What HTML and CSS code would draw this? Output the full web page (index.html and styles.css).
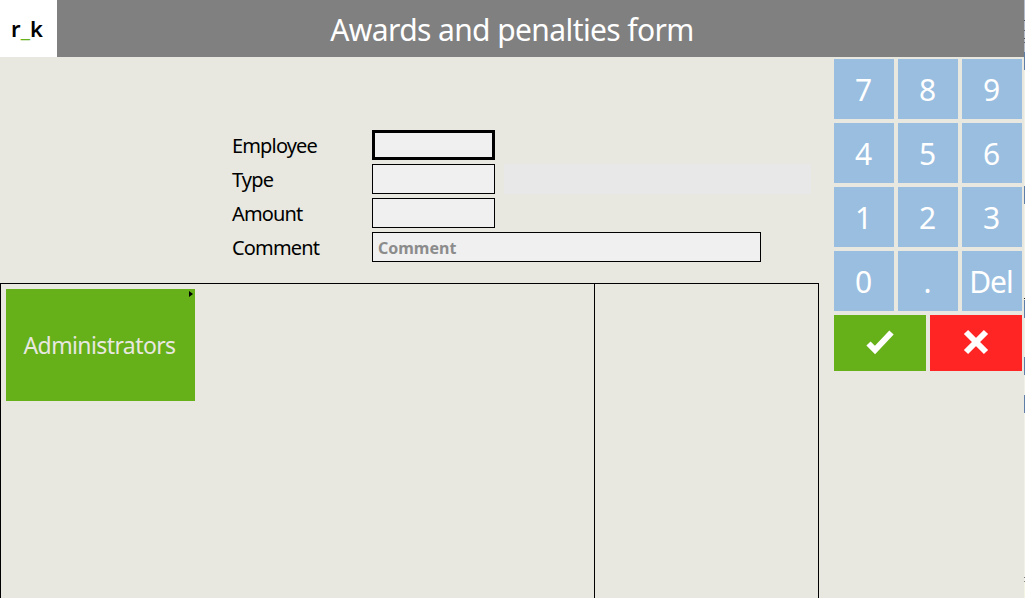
FILE: index.html
```html
<!DOCTYPE html>
<html lang="en">
<head>
    <meta charset="UTF-8">
    <meta name="viewport" content="width=device-width, initial-scale=1.0">
    <title>Awards and penalties form</title>
    <link rel="stylesheet" href="styles.css">
</head>
<body>
    <div class="header">
        <div class="logo">r<span class="logo-line">_</span>k</div>
        <h1>Awards and penalties form</h1>
    </div>

    <div class="main">
        <div class="left">
            <div class="form">
                <div class="row">
                    <label>Employee</label>
                    <input type="text" class="field active">
                </div>
                <div class="row">
                    <label>Type</label>
                    <input type="text" class="field">
                    <div class="type-name"></div>
                </div>
                <div class="row">
                    <label>Amount</label>
                    <input type="text" class="field">
                </div>
                <div class="row">
                    <label>Comment</label>
                    <input type="text" class="field wide" placeholder="Comment">
                </div>
            </div>

            <div class="panels">
                <div class="groups">
                    <button class="tile">Administrators<span class="tile-mark"></span></button>
                </div>
                <div class="items"></div>
            </div>
        </div>

        <div class="side">
            <div class="keypad">
                <button>7</button>
                <button>8</button>
                <button>9</button>
                <button>4</button>
                <button>5</button>
                <button>6</button>
                <button>1</button>
                <button>2</button>
                <button>3</button>
                <button>0</button>
                <button>.</button>
                <button>Del</button>
            </div>
            <div class="actions">
                <button class="ok">
                    <svg width="28" height="26" viewBox="0 0 28 26"><path d="M2.5 14.5 L9 21 L25.5 3.5" fill="none" stroke="#fff" stroke-width="6"/></svg>
                </button>
                <button class="cancel">
                    <svg width="26" height="26" viewBox="0 0 26 26"><path d="M3 3 L23 23 M23 3 L3 23" fill="none" stroke="#fff" stroke-width="6"/></svg>
                </button>
            </div>
        </div>
    </div>

    <div class="edge"></div>
</body>
</html>
```

FILE: styles.css
```css
html, body {
    height: 100%;
}

body {
    margin: 0;
    padding: 0;
    overflow: hidden;
    background-color: #e8e8e0;
    font-family: "Noto Sans", sans-serif;
    color: #000;
}

.header {
    display: flex;
    height: 57px;
    background-color: #808080;
}

.logo {
    box-sizing: border-box;
    width: 57px;
    padding-right: 3px;
    line-height: 57px;
    background-color: #fff;
    text-align: center;
    font-size: 22px;
    font-weight: 600;
}

.logo-line {
    color: #66b01a;
}

.header h1 {
    flex: 1;
    margin: 0 58px 0 0;
    text-align: center;
    font-size: 30px;
    font-weight: normal;
    letter-spacing: -0.6px;
    line-height: 60px;
    color: #fff;
}

.main {
    display: flex;
    height: 541px;
}

.left {
    width: 819px;
    display: flex;
    flex-direction: column;
}

.form {
    height: 226px;
    box-sizing: border-box;
    padding-top: 73px;
    padding-left: 232px;
}

.row {
    display: flex;
    align-items: center;
    height: 30px;
    margin-bottom: 4px;
}

.row label {
    width: 140px;
    font-size: 20px;
    letter-spacing: -0.85px;
}

.field {
    box-sizing: border-box;
    width: 123px;
    height: 30px;
    margin: 0;
    padding: 0 5px;
    border: 1px solid #000;
    border-radius: 0;
    outline: none;
    background-color: #f0f0f0;
}

.field.active {
    border-width: 3px;
}

.field.wide {
    width: 389px;
    padding-top: 2px;
    font-family: "Noto Sans", sans-serif;
    font-size: 16px;
    font-weight: bold;
}

.field.wide::placeholder {
    color: #8c8c8c;
    opacity: 1;
}

.type-name {
    width: 307px;
    height: 30px;
    margin-left: 9px;
    background-color: #e8e8e8;
}

.panels {
    flex: 1;
    display: flex;
    border-top: 1px solid #000;
    border-right: 1px solid #000;
    border-left: 1px solid #000;
}

.groups {
    width: 594px;
    box-sizing: border-box;
    padding: 5px;
    border-right: 1px solid #000;
}

.tile {
    position: relative;
    display: block;
    width: 189px;
    height: 112px;
    padding: 0 2px 0 0;
    border: none;
    background-color: #66b01a;
    color: #e8e8e0;
    font-family: "Noto Sans", sans-serif;
    font-size: 23px;
    letter-spacing: -0.6px;
}

.tile-mark {
    position: absolute;
    top: 2px;
    right: 2px;
    border-top: 3px solid transparent;
    border-bottom: 3px solid transparent;
    border-left: 4px solid #000;
}

.side {
    width: 188px;
    padding: 2px 3px 0 15px;
}

.keypad {
    display: grid;
    grid-template-columns: repeat(3, 60px);
    grid-auto-rows: 60px;
    gap: 4px;
}

.keypad button {
    padding: 0 2px 0 0;
    border: none;
    background-color: #99bee0;
    color: #fff;
    font-family: "Noto Sans", sans-serif;
    font-size: 30px;
    letter-spacing: -1px;
}

.actions {
    display: flex;
    gap: 4px;
    margin-top: 4px;
}

.actions button {
    display: flex;
    align-items: center;
    justify-content: center;
    width: 92px;
    height: 56px;
    padding: 0;
    border: none;
}

.actions svg {
    margin-bottom: 2px;
}

.ok {
    background-color: #66b01a;
}

.cancel {
    background-color: #ff2525;
}

.edge {
    position: absolute;
    top: 0;
    right: 0;
    width: 1px;
    height: 598px;
    background: linear-gradient(to bottom,
        #b4bccc 0 20px, #555 20px 21px, #b4bccc 21px 30px, #666 30px 31px,
        #b4bccc 31px 38px, #555 38px 39px, #b4bccc 39px 42px, #666 42px 43px,
        #b4bccc 43px 52px, #5f7fa8 52px 70px, #f1f1ea 70px 186px,
        #5f7fa8 186px 204px, #f1f1ea 204px 298px, #222 298px 299px, #f1f1ea 299px 300px,
        #5f7fa8 300px 318px, #f1f1ea 318px 357px, #5f7fa8 357px 375px,
        #f1f1ea 375px 395px, #5f7fa8 395px 413px, #f1f1ea 413px 577px,
        #777 577px 578px, #f1f1ea 578px 581px, #888 581px 582px, #f4f4e4 582px);
}
```
